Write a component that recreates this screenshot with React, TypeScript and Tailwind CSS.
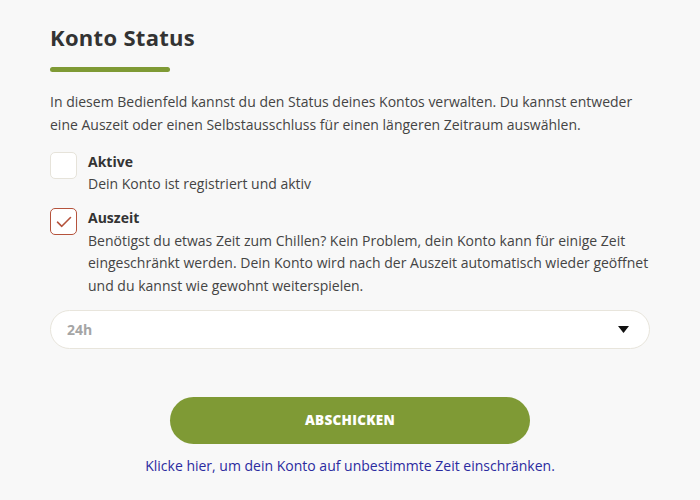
const font = { fontFamily: '"Open Sans", "Liberation Sans", sans-serif' };

function Box({ checked }: { checked?: boolean }) {
  return (
    <div
      className={`mt-[1px] flex h-[27px] w-[27px] shrink-0 items-center justify-center rounded-[5px] border bg-white ${
        checked ? "border-[#b5533c]" : "border-[#e6e3da]"
      }`}
    >
      {checked && (
        <svg width="16" height="12" viewBox="0 0 16 12" fill="none">
          <path d="M1.5 6.2 L5.8 10.3 L14.5 1.5" stroke="#b5533c" strokeWidth="1.6" strokeLinecap="round" strokeLinejoin="round" />
        </svg>
      )}
    </div>
  );
}

export default function App() {
  return (
    <main className="h-[500px] w-[700px] bg-[#f8f8f8] text-[#444]" style={font}>
      <div className="px-[50px] pt-[22px]">
        <h1 className="text-[22px] font-bold leading-[30px] tracking-[0.3px] text-[#333]">Konto Status</h1>
        <div className="mt-[15px] h-[5px] w-[120px] rounded-full bg-[#7f9a35]" />

        <p className="mt-[18px] text-[14px] leading-[23px]">
          In diesem Bedienfeld kannst du den Status deines Kontos verwalten. Du kannst entweder eine Auszeit oder einen
          Selbstausschluss für einen längeren Zeitraum auswählen.
        </p>

        <div className="mt-[15px] flex gap-[11px]">
          <Box />
          <div className="text-[14px] leading-[22px]">
            <div className="font-bold text-[#333]">Aktive</div>
            <div>Dein Konto ist registriert und aktiv</div>
          </div>
        </div>

        <div className="mt-[12px] flex gap-[11px]">
          <Box checked />
          <div className="text-[14px] leading-[22.5px]">
            <div className="font-bold text-[#333]">Auszeit</div>
            <div>
              Benötigst du etwas Zeit zum Chillen? Kein Problem, dein Konto kann für einige Zeit eingeschränkt werden.
              Dein Konto wird nach der Auszeit automatisch wieder geöffnet und du kannst wie gewohnt weiterspielen.
            </div>
          </div>
        </div>

        <div className="mt-[13px] flex h-[39px] items-center justify-between rounded-full border border-[#e8e5dc] bg-white pl-[16px] pr-[20px]">
          <span className="text-[14px] font-bold text-[#a5a5a5]">24h</span>
          <svg width="11" height="7" viewBox="0 0 11 7">
            <path d="M0 0 H11 L5.5 7 Z" fill="#111" />
          </svg>
        </div>

        <div className="mt-[48px] flex flex-col items-center">
          <button className="h-[47px] w-[360px] rounded-full bg-[#7f9a35] text-[13.5px] font-extrabold tracking-[0.3px] text-white">
            ABSCHICKEN
          </button>
          <a className="mt-[12px] text-[14px] leading-[20px] text-[#2b2ba0]">
            Klicke hier, um dein Konto auf unbestimmte Zeit einschränken.
          </a>
        </div>
      </div>
    </main>
  );
}
